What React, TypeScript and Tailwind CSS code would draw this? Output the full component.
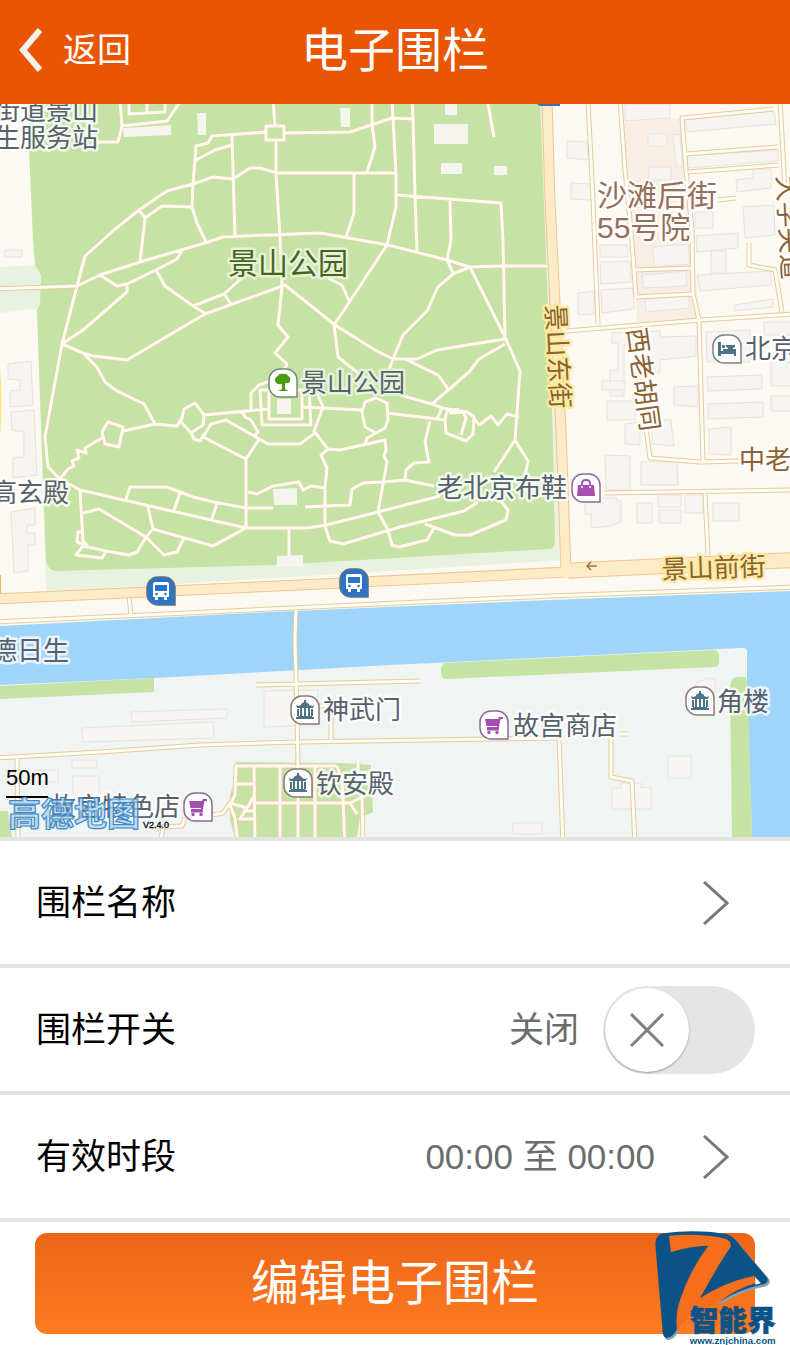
import { useState } from "react";
import type { ReactNode } from "react";

const FONT = "font-['Liberation_Sans','Noto_Sans_CJK_SC',sans-serif]";

// footpaths inside the park
const PARK_PATHS = [
  "M120 100L122 126L118 142L98 142",
  "M180 102L167 121L122 126",
  "M129 100V114L165 112V100M147 100V112",
  "M273 100L275 126M266 126H284V140H266Z",
  "M266 132L212 136L208 143L196 146L195 160L193 184L192 207L197 223L206 242",
  "M232 135L235 237M232 145L215 150L196 160",
  "M276 140V174L280 237L282 287L278 325L288 337L275 353L287 364L283 372",
  "M284 133L350 132L392 118L413 119",
  "M372 100V125L375 147L367 172",
  "M114 230L139 210L167 191L193 184L213 177L233 179L250 168H260L277 173H396",
  "M139 210L145 218L140 262M145 218L162 206L193 207",
  "M354 173V213L346 237",
  "M392 100L396 173V207L390 232L387 245L350 301L334 325L338 357L358 373",
  "M412 100L413 119L415 195L417 252",
  "M396 195L501 203L503 240L505 337",
  "M450 200L451 240L447 260L453 273",
  "M488 104L494 137",
  "M114 230L85 256L77 286L62 344L45 437L48 467L60 479",
  "M77 286L100 275L140 262L205 243L223 237L268 235L320 233L388 245L447 260L470 267L502 266H550",
  "M100 275L117 286L127 284L156 270L177 259L182 251",
  "M127 284V292L83 330L62 344",
  "M156 270L165 286L193 306L224 294L243 277L256 262M193 306L205 313M224 294L231 304",
  "M62 344L83 353L93 356L127 360L205 314L285 285L335 325L375 350L393 359H417L437 350L505 339",
  "M83 353L97 367L105 382L117 391L144 404L155 424",
  "M108 422L123 427L119 447L105 444L102 432Z",
  "M123 431L155 424L177 426L183 416M184 409L195 403L204 415L203 425L191 433L181 422Z",
  "M191 433L194 439L200 441L204 434M204 415L268 409",
  "M203 437L211 424L226 420L268 444H300L315 433",
  "M203 437L246 459L260 438M246 459V528",
  "M102 438L85 448L86 453L77 450L79 458L72 461L74 466L68 469L60 479L80 490",
  "M251 411V393L259 385L270 381M242 411L245 417L251 420L258 432L254 436",
  "M260 390L262 425H311L309 390ZM269 390V419H302V390",
  "M316 390L323 407L314 431L328 449M302 407L362 410",
  "M362 412L365 402L376 398L387 403L388 420L385 428L376 433L365 427ZM376 433L367 438L365 444",
  "M387 413L445 420M463 412L466 418L461 435M449 413L463 412",
  "M400 395L432 404L442 408L467 412L474 417L473 434L466 441L446 433L445 420L447 411L459 409M442 408L437 419",
  "M474 418L479 425L491 416L498 425L507 414L519 417",
  "M328 278L342 285L349 301",
  "M470 267L453 274L438 287L427 311L403 335L393 359L389 370",
  "M470 267L505 337L520 371L515 440L528 461L525 476M515 440L494 472",
  "M505 344L479 359L469 372L432 404M405 359L438 375L448 389",
  "M430 421L425 442L429 462L414 463L406 470L405 480",
  "M328 449L340 450L385 440L386 450L384 456L387 462L378 512L388 530L392 545L399 547L427 540L434 528",
  "M328 449L321 455L327 468L325 487V526L330 541L343 544L400 527L464 511L478 502",
  "M434 486L405 480L383 482L363 483L352 489L350 505L305 507",
  "M440 496L378 512L326 525L308 528H246",
  "M325 488L311 486L303 490L299 482L273 486L257 494L248 492",
  "M425 524L455 535H470L506 520L508 510L500 500",
  "M289 528V556M80 490L246 528L213 546L153 529L148 507",
  "M80 490L83 541L88 546M126 499L130 487H167L193 497L214 502L246 508H273",
  "M174 510L180 493M212 519L217 503",
  "M83 513L99 509L146 537L164 555L177 552L184 538",
  "M153 529L146 537L137 552L129 555L106 551L83 546L76 555L102 558L106 551M83 531L78 532L77 542L88 546",
];

// lanes and small streets, drawn with a tan edge
const LANES = [
  "M-5 289L77 286",
  "M588 100L593 200L598 325",
  "M620 100L625 170L631 230L636 297",
  "M773 109L682 118L686 170L692 230L693 294L699 320L703 461",
  "M686 154L778 147M688 172L779 165M780 100L785 190",
  "M566 331L700 320L795 314",
  "M634 270L693 268M636 297L693 294",
  "M646 428L650 458L700 462L740 461",
  "M604 493L795 490M705 493L708 557",
  "M749 243V265L775 270L782 312",
  "M718 200L736 198",
  "M129 596L131 616",
  "M-5 622L270 609L550 596L795 587",
  "M296 610L295 640L297 715L298 766",
  "M256 685L420 681",
  "M-5 758L100 752L200 745L298 742L556 738M17 757L18 845",
  "M300 706H331V740M559 737L563 845",
  "M620 734H628M611 737V777L632 781L635 845",
  "M160 845L163 827L182 826L185 818",
];

const GARDEN_PATHS = [
  "M337 766H236L235 795L230 805L235 818L238 845",
  "M254 766L255 845M280 766V845M298 766V845M315 766V845M337 766L342 780L345 845",
  "M236 784H254M255 803H350L362 797L363 845M350 803L357 814M358 762V775",
  "M212 815L223 813L230 803L247 808L254 796M247 808L240 819H254M243 811H254",
];

const BLOCKS = [
  "M5 250H22V257H5Z",
  "M8 364L31 361L33 405L10 407V391L20 390V380L8 379Z",
  "M11 412L34 410L37 475L13 478V458L24 457V432L12 430Z",
  "M11 512L35 508V525H27V533H35V545H28V571L14 573Z",
  "M625 104H670V118L625 121Z",
  "M567 141L587 142L588 160L567 158Z",
  "M571 183L590 184L591 200L571 199Z",
  "M648 134H667V146H648Z",
  "M673 135L680 134L683 167L676 166Z",
  "M649 167H671V181L649 179Z",
  "M685 120L774 111L776 124L687 132Z",
  "M687 156L778 150V161L688 168Z",
  "M736 180L753 178V169H771V188L737 192Z",
  "M743 207L774 205L775 235L745 238Z",
  "M695 212H713V228H695Z",
  "M696 236L738 233V248L697 252Z",
  "M711 251H726V273H711Z",
  "M697 275L771 271V285L700 291Z",
  "M734 305L773 299V307L735 311Z",
  "M653 247L688 244L690 264L654 267Z",
  "M642 275L686 271L687 286L643 288Z",
  "M645 299L689 296V308L646 312Z",
  "M600 245H628V257H600Z",
  "M600 262L630 261L631 282L601 284Z",
  "M578 293L594 291V314L578 315Z",
  "M601 290L633 288L634 309L602 313Z",
  "M612 333L660 331V337L696 336V356L660 360V373H648V345H624V396H610V370H618V343H612Z",
  "M602 381H625V390H602Z",
  "M607 401H635V420H607Z",
  "M674 387L698 386V407L674 405Z",
  "M706 332L750 330V362H707Z",
  "M707 377L762 375V389L708 391Z",
  "M708 404L763 402V417L708 419Z",
  "M709 429L731 427V455L709 454Z",
  "M771 362H795V386H771Z",
  "M771 396H795V411H771Z",
  "M764 322H795V335H764Z",
  "M625 424L640 422V445L625 444Z",
  "M652 420H671L674 446L652 444Z",
  "M605 455L630 456V490H606Z",
  "M641 462H677L678 485H641Z",
  "M585 498H617V501H621V522L610 526L591 528V514H585Z",
  "M637 503H652V523H637Z",
  "M658 495H681V507H658Z",
  "M659 510H681V523H659Z",
  "M685 495H703V513H685Z",
  "M713 503H739V521H713Z",
  "M82 728L213 722L214 738L83 742Z",
  "M131 712L227 709V718L132 722Z",
  "M264 691L318 690V725L264 727Z",
  "M72 760H97V768H72Z",
  "M73 776H99V796H73Z",
  "M35 770H58V782H35Z",
  "M612 788H621V783H641V788L651 787V809H612Z",
  "M668 756H691V778H668Z",
  "M513 823H542V834H513Z",
  "M696 683L708 678L715 680V692H696Z",
];

// pale huts that stand on the park lawn
const HUTS = [
  "M123 128L171 125V135L124 137Z",
  "M197 113H206V135H198Z",
  "M340 108H350V127H341Z",
  "M445 104H457V115H445Z",
  "M434 124H468V144H434Z",
  "M441 163H462V174H441Z",
  "M494 166H507V175H494Z",
  "M277 399H291V414H277Z",
  "M273 489L297 488V505H274Z",
  "M277 556L303 555V567H277Z",
];

function Roads({ d, edge, fill, outer, inner }: { d: string; edge: string; fill: string; outer: number; inner: number }) {
  return (
    <g fill="none" strokeLinejoin="round">
      <path d={d} stroke={edge} strokeWidth={outer} />
      <path d={d} stroke={fill} strokeWidth={inner} />
    </g>
  );
}

type LabelProps = {
  x: number;
  y: number;
  children: ReactNode;
  size?: number;
  color?: string;
  halo?: string;
  rotate?: number;
};

function Label({ x, y, children, size = 26, color = "#56616d", halo = "#ffffffcc", rotate = 0 }: LabelProps) {
  return (
    <text
      transform={`translate(${x} ${y}) rotate(${rotate})`}
      fontSize={size}
      fill={color}
      stroke={halo}
      strokeWidth={5}
      strokeLinejoin="round"
      paintOrder="stroke"
    >
      {children}
    </text>
  );
}

function Poi({ x, y, edge, fill = "#ffffff", children }: { x: number; y: number; edge: string; fill?: string; children: ReactNode }) {
  return (
    <g transform={`translate(${x} ${y})`}>
      <path d="M11 0H17A11 11 0 0 1 28 11V28H11A11 11 0 0 1 0 17V11A11 11 0 0 1 11 0Z" fill={fill} stroke={edge} strokeWidth="1.5" />
      {children}
    </g>
  );
}

const Bus = () => (
  <g>
    <path d="M8 5H20Q22 5 22 7V20H20V23H17V20H11V23H8V20H6V7Q6 5 8 5Z" fill="#fff" />
    <path d="M8 8H20V14H8Z" fill="#2b74c7" />
    <circle cx="9.5" cy="17" r="1.3" fill="#2b74c7" />
    <circle cx="18.5" cy="17" r="1.3" fill="#2b74c7" />
  </g>
);

const Pavilion = () => (
  <path
    d="M13 4H15V6L18 8V9L21 10L23 9L22 12H19V20H21V23H7V20H9V12H6L5 9L7 10L10 9V8L13 6ZM11 12V20H13V12ZM15 12V20H17V12ZM6 13H8V20H6ZM20 13H22V20H20ZM5 21H23V23H5Z"
    fill="#4f7286"
  />
);

const Cart = () => (
  <g fill="#a44fb0">
    <path d="M5 8H18L19 6H23V8H20.5L18.5 18H7V16H17V15H6.5Z" />
    <path d="M7 17.5H19V19.5H7Z" />
    <circle cx="9" cy="21.5" r="1.7" />
    <circle cx="17" cy="21.5" r="1.7" />
  </g>
);

function FenceMap() {
  return (
    <svg viewBox="0 104 790 733" className="block w-full" role="img" aria-label="地图">
      <rect y="104" width="790" height="733" fill="#fcf9f2" />
      <path d="M0 267L36 265L42 275L40 308L0 313Z" fill="#e9f2de" />
      <path d="M38 330L540 104H547L556 340L566 560L46 592Z" fill="#e9f2e0" />
      <path
        d="M28 100L29 150L33 240L35 265L41 275L40 305L37 310L39 370L43 480L46 560Q48 571 56 571L276 565L550 549Q555 548 555 541L553 440L547 280L540 100Z"
        fill="#c5e3a4"
      />
      <path d="M624 122L680 118L686 178L700 320L637 322L630 225Z" fill="#f8eee4" />
      <path d="M-5 685L154 678L390 664L746 648L752 845H-5Z" fill="#f0f4f3" />
      <path
        d="M0 626L270 612L550 600L790 591V837H752L747 690V651Q746 647 741 648L390 665L154 678L0 685Z"
        fill="#9fd4fb"
      />
      <g fill="#c5e3a4">
        <path d="M0 686L154 678V692L0 699Z" />
        <path d="M444 663L712 650Q719 650 719 655V663Q719 667 714 667L445 679Q441 678 441 672V667Z" />
        <path d="M730 690Q730 677 738 677H746L748 690L752 837H732Z" />
        <path d="M236 762L340 763L371 765V771H350L355 780L372 786L373 812L360 818L357 837H235L230 820V795L235 780Z" />
        <path d="M0 811H8L12 837H0Z" />
      </g>
      <g fill="#f6f5f2" stroke="#e6e3de">
        {BLOCKS.map((d) => (
          <path key={d} d={d} />
        ))}
      </g>
      <Roads d={PARK_PATHS.join("")} edge="#e6cfa8" fill="#fffaf0" outer={4} inner={3} />
      <Roads d={GARDEN_PATHS.join("")} edge="#e8cfa6" fill="#fffaf0" outer={5} inner={3} />
      <g fill="#f5f4ef">
        {HUTS.map((d) => (
          <path key={d} d={d} />
        ))}
      </g>
      <Roads d={LANES.join("")} edge="#e4cba0" fill="#fffcf2" outer={5} inner={3} />
      <g fill="none" strokeLinejoin="round">
        <path d="M-5 599L300 585L566 572M547 100L550 200L561 430L566 570" stroke="#efc58f" strokeWidth="11" />
        <path d="M568 571L580 570L795 560" stroke="#efc58f" strokeWidth="16" />
        <path d="M-5 599L300 585L570 572M547 100L550 200L561 430L566 572" stroke="#fdebc8" strokeWidth="9" />
        <path d="M564 571L580 570L795 560" stroke="#fdebc8" strokeWidth="14" />
      </g>
      <path d="M0 575V593" stroke="#efb868" strokeWidth="2" />
      <path d="M0 367Q3 400 0 435Z" fill="#ffe27a" />
      <path d="M597 566H587M591 562L587 566L591 570" stroke="#9c7444" strokeWidth="1.5" fill="none" />
      <path d="M537 104H560V106H540Z" fill="#3a6fae" />

      <Label x={-6} y={120}>街道景山</Label>
      <Label x={-6} y={147}>生服务站</Label>
      <Label x={228} y={274} size={30} color="#486320" halo="#e6f3d8">景山公园</Label>
      <Label x={301} y={392} halo="#e6f3d8">景山公园</Label>
      <Label x={597} y={206} size={30} color="#94705c">沙滩后街</Label>
      <Label x={597} y={238} size={30} color="#94705c">55号院</Label>
      <Label x={777} y={176} color="#8a6233" rotate={87}>大学夹道</Label>
      <Label x={546} y={305} color="#8a6233" halo="#fdeaa0" rotate={87}>景山东街</Label>
      <Label x={627} y={329} color="#8a6233" rotate={82}>西老胡同</Label>
      <Label x={662} y={579} color="#8a6233" halo="#fdeaa0" rotate={-2}>景山前街</Label>
      <Label x={739} y={469} color="#8a6233">中老</Label>
      <Label x={745} y={358}>北京</Label>
      <Label x={437} y={497}>老北京布鞋</Label>
      <Label x={-9} y={502}>高玄殿</Label>
      <Label x={-9} y={660}>德日生</Label>
      <Label x={323} y={719}>神武门</Label>
      <Label x={513} y={735}>故宫商店</Label>
      <Label x={717} y={711}>角楼</Label>
      <Label x={316} y={793}>钦安殿</Label>
      <Label x={50} y={816}>故宫特色店</Label>

      <Poi x={269} y={369} edge="#7b8a78">
        <path
          d="M14 5Q18 4 19 7Q22 8 21 11Q21 15 16 14V19Q16 21 20 22H8Q13 21 13 19V15Q6 16 6 11Q6 8 9 7Q10 4 14 5Z"
          fill="#4b9a12"
        />
      </Poi>
      <Poi x={713} y={335} edge="#7c8288">
        <path d="M5 7H8V16H23V21H21V19H8V21H5ZM13 10H22V12L20 13V14H23V16H10V14H15V13L13 12Z" fill="#4f7286" />
        <circle cx="10.500" cy="11.500" r="1.700" fill="#4f7286" />
      </Poi>
      <Poi x={572} y={474} edge="#8d6a96">
        <path d="M6 11H22L23 22H5Z" fill="#a44fb0" />
        <path d="M10 14V9Q10 6 14 6Q18 6 18 9V14" fill="none" stroke="#a44fb0" strokeWidth="1.8" />
        <path d="M10 12V14M18 12V14" stroke="#fff" strokeWidth="1.5" />
      </Poi>
      <Poi x={147} y={577} edge="#5d6f85" fill="#2b74c7"><Bus /></Poi>
      <Poi x={340} y={569} edge="#5d6f85" fill="#2b74c7"><Bus /></Poi>
      <Poi x={291} y={696} edge="#8a7c77"><Pavilion /></Poi>
      <Poi x={686} y={687} edge="#8a7c77"><Pavilion /></Poi>
      <Poi x={284} y={769} edge="#8a7c77"><Pavilion /></Poi>
      <Poi x={480} y={711} edge="#8d6a96"><Cart /></Poi>
      <Poi x={184} y={793} edge="#8d6a96"><Cart /></Poi>

      <text x="6" y="785" fontSize="22">50m</text>
      <path d="M6 797H48" stroke="#000" strokeWidth="2" />
      <text x="8" y="826" fontSize="33" fontWeight="700" fill="#a9d2ef" fillOpacity="0.7" stroke="#3f8ac6" strokeWidth="1.2">
        高德地图
      </text>
      <text x="143" y="828" fontSize="9" stroke="#000" strokeWidth="0.3">V2.4.0</text>
    </svg>
  );
}

const Chevron = () => (
  <svg width="26" height="44" viewBox="0 0 26 44" fill="none" stroke="#787878" strokeWidth="3" aria-hidden>
    <path d="M1 1L24 22L1 43" />
  </svg>
);

function SiteLogo() {
  return (
    <svg width="190" height="130" viewBox="0 0 570 390" className="pointer-events-none absolute right-0 bottom-0" aria-hidden>
      <path
        d="M166 88Q166 60 190 55Q280 42 375 56Q400 62 415 85L505 190Q508 206 490 211Q420 224 360 262L300 252L245 300Q232 320 230 348Q215 375 196 370Q188 366 187 340Z"
        fill="#8fa0ad"
        transform="translate(4 4)"
      />
      <path
        d="M166 88Q166 60 190 55Q280 42 375 56Q400 62 415 85L503 190Q505 204 490 208Q420 222 360 260L300 252L245 300Q232 320 230 345Q215 372 196 368Q188 365 187 340Z"
        fill="#0b5286"
      />
      <path
        d="M207 62Q300 54 372 70Q396 78 392 96Q360 140 300 250Q370 202 463 182L466 205Q410 220 358 262L270 300L240 335L232 348Q224 300 242 250Q270 165 325 92Q270 92 213 112Z"
        fill="#f76f1c"
      />
      <path d="M465 186L483 205L466 209Z" fill="#fff" />
      <text x="269" y="347" fontSize="86" fontWeight="900" fill="#0b5286" stroke="#0b5286" strokeWidth="2">智能界</text>
      <text x="269" y="386" fontSize="29" fontWeight="700" fill="#0b5286">www.znjchina.com</text>
    </svg>
  );
}

export default function App() {
  const [enabled, setEnabled] = useState(false);

  return (
    <div className={`relative bg-white text-black ${FONT}`}>
      <header className="grid h-[104px] grid-cols-[1fr_auto_1fr] items-center bg-[#ea5504] pb-1 text-white">
        <button type="button" className="flex items-center gap-5 pl-[19px] text-[34px] leading-none">
          <svg width="24" height="44" viewBox="0 0 24 44" fill="none" stroke="#f6f2ee" strokeWidth="6" aria-hidden>
            <path d="M21 2L4 22L21 42" />
          </svg>
          返回
        </button>
        <h1 className="text-[47px] leading-none">电子围栏</h1>
      </header>

      <FenceMap />

      <main className="text-[35px] leading-none">
        <button type="button" className="flex h-[127px] w-full items-center justify-between border-t-4 border-[#e3e3e3] pr-[61px] pl-9">
          <span>围栏名称</span>
          <Chevron />
        </button>

        <div className="flex h-[127px] items-center border-t-4 border-[#e3e3e3] pr-[35px] pl-9">
          <label htmlFor="fence-switch" className="flex-1">围栏开关</label>
          <span className="mr-6 text-[#6c6c6c]">{enabled ? "开启" : "关闭"}</span>
          <label className="relative block h-[88px] w-[152px] cursor-pointer rounded-full bg-[#e5e5e5] p-0.5">
            <input
              id="fence-switch"
              type="checkbox"
              role="switch"
              checked={enabled}
              onChange={(e) => setEnabled(e.target.checked)}
              className="peer sr-only"
            />
            <span className="flex size-[84px] items-center justify-center rounded-full bg-white shadow-[0_1px_2px_#999] transition-transform peer-checked:translate-x-16">
              <svg width="34" height="34" viewBox="0 0 34 34" stroke="#808080" strokeWidth="3" aria-hidden>
                <path d="M1 1L33 33M33 1L1 33" />
              </svg>
            </span>
          </label>
        </div>

        <button type="button" className="flex h-[127px] w-full items-center border-t-4 border-[#e3e3e3] pr-[61px] pl-9">
          <span className="flex-1 text-left">有效时段</span>
          <span className="mr-12 text-[#6c6c6c]">00:00 至 00:00</span>
          <Chevron />
        </button>

        <div className="border-t-4 border-[#e3e3e3] px-[35px] py-[11px]">
          <button
            type="button"
            className="h-[101px] w-full rounded-xl bg-linear-to-b from-[#ec6519] to-[#ff7b20] text-[48px] leading-none text-white"
          >
            编辑电子围栏
          </button>
        </div>
      </main>

      <SiteLogo />
    </div>
  );
}
